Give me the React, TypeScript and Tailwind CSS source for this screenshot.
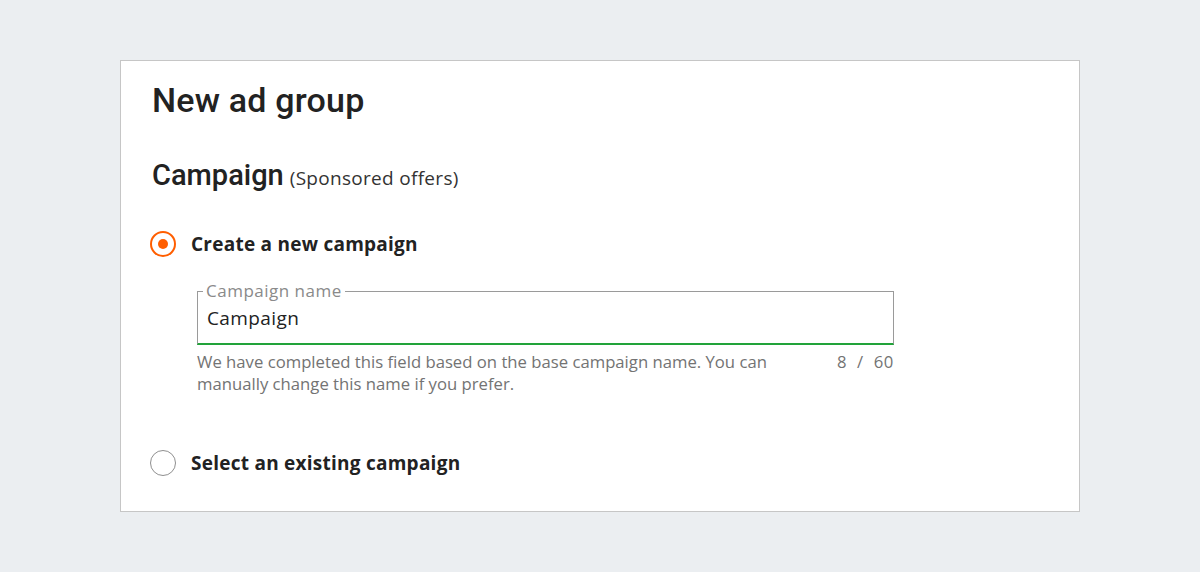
import { useState } from "react";

type Choice = "new" | "existing";

const Radio = ({ checked }: { checked: boolean }) => (
  <span
    className={
      checked
        ? "flex h-[26px] w-[26px] shrink-0 items-center justify-center rounded-full border-2 border-[#ff5e00] bg-white"
        : "flex h-[26px] w-[26px] shrink-0 items-center justify-center rounded-full border-[1.5px] border-[#8f8f8f] bg-white"
    }
  >
    {checked && <span className="h-[10px] w-[10px] rounded-full bg-[#ff5e00]" />}
  </span>
);

export default function App() {
  const [choice, setChoice] = useState<Choice>("new");
  const [name, setName] = useState("Campaign");

  return (
    <div className="flex min-h-[572px] justify-center bg-[#ebeef1] pt-[60px] font-['Open_Sans',sans-serif]">
      <div className="h-[452px] w-[960px] border border-[#c6c6c6] bg-white px-[31px] pt-[19px]">
        <h1 className="font-['Roboto',sans-serif] text-[34px] leading-[40px] font-medium tracking-[0.2px] text-[#222]">
          New ad group
        </h1>

        <h2 className="mt-[37px] flex items-baseline gap-[6px] text-[#222]">
          <span className="font-['Roboto',sans-serif] text-[29px] leading-[36px] font-medium">Campaign</span>
          <span className="text-[19px] tracking-[0.3px] text-[#333]">(Sponsored offers)</span>
        </h2>

        <button
          type="button"
          onClick={() => setChoice("new")}
          className="mt-[38px] flex items-center gap-[15px] -ml-[2px]"
        >
          <Radio checked={choice === "new"} />
          <span className="text-[19px] leading-[26px] font-bold tracking-[0.25px] text-[#222]">
            Create a new campaign
          </span>
        </button>

        <div className="ml-[45px] mt-[24px] w-[697px]">
          <fieldset className="border border-b-2 border-[#9a9a9a] border-b-[#22a33a] px-[9px] pt-[5px] pb-[13px]">
            <legend className="-ml-[4px] px-[3px] text-[17px] leading-[20px] tracking-[0.5px] text-[#8a8a8a]">
              Campaign name
            </legend>
            <input
              value={name}
              onChange={(e) => setName(e.target.value)}
              maxLength={60}
              className="block w-full bg-transparent text-[19px] leading-[24px] tracking-[0.4px] text-[#222] outline-none"
            />
          </fieldset>
          <div className="mt-[6px] flex justify-between text-[16.7px] leading-[22px] text-[#737373]">
            <p className="max-w-[585px]">
              We have completed this field based on the base campaign name. You can manually change this name if you
              prefer.
            </p>
            <span className="whitespace-pre tracking-[0.6px]">{`${name.length}  /  60`}</span>
          </div>
        </div>

        <button
          type="button"
          onClick={() => setChoice("existing")}
          className="mt-[55px] flex items-center gap-[15px] -ml-[2px]"
        >
          <Radio checked={choice === "existing"} />
          <span className="text-[19px] leading-[26px] font-bold tracking-[0.25px] text-[#222]">
            Select an existing campaign
          </span>
        </button>
      </div>
    </div>
  );
}
